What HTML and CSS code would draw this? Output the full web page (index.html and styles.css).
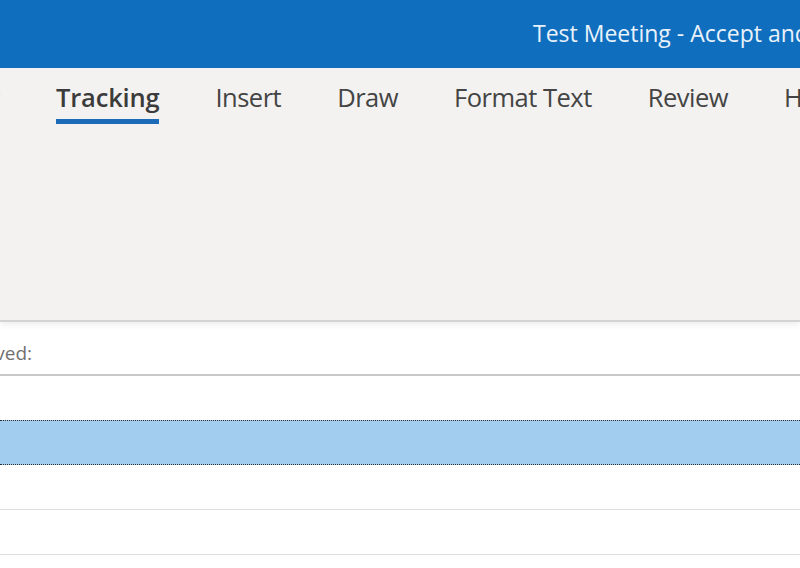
FILE: index.html
```html
<!DOCTYPE html>
<html lang="en">
<head>
<meta charset="utf-8">
<title>Test Meeting</title>
<link rel="stylesheet" href="styles.css">
</head>
<body>
<div class="window">
  <header class="titlebar">
    <div class="title">Test Meeting - Accept and Decline - Meeting</div>
  </header>
  <nav class="ribbon">
    <ul class="tabs">
      <li class="tab tab-cut">Meeting</li>
      <li class="tab active">Tracking</li>
      <li class="tab">Insert</li>
      <li class="tab">Draw</li>
      <li class="tab">Format Text</li>
      <li class="tab">Review</li>
      <li class="tab">Help</li>
    </ul>
  </nav>
  <section class="list">
    <div class="row head">
      <div class="label"><span>The following responses to this meeting have been received:</span></div>
    </div>
    <div class="row"></div>
    <div class="row selected"></div>
    <div class="row"></div>
    <div class="row"></div>
    <div class="row"></div>
  </section>
</div>
</body>
</html>
```
FILE: styles.css
```css
* { box-sizing: border-box; }
html, body { margin: 0; padding: 0; }
body {
  width: 800px;
  height: 568px;
  overflow: hidden;
  background: #ffffff;
  font-family: "Open Sans", "Noto Sans", "DejaVu Sans", sans-serif;
}
.window { display: flex; flex-direction: column; height: 568px; overflow: hidden; }
.window > * { flex: none; }
.titlebar {
  height: 68px;
  background: #106ebe;
  display: flex;
  align-items: center;
  padding-left: 533px;
  overflow: hidden;
}
.title {
  color: #e9f2fb;
  font-size: 23px;
  white-space: nowrap;
  padding-bottom: 2px;
}
.ribbon {
  height: 254px;
  background: #f3f2f1;
  border-bottom: 2px solid #d4d3d2;
  box-shadow: 0 3px 6px rgba(0,0,0,0.07);
  position: relative;
  z-index: 1;
  overflow: hidden;
}
.tabs {
  list-style: none;
  margin: 0;
  padding: 0;
  display: flex;
  gap: 56px;
  margin-left: -93px;
  white-space: nowrap;
}
.tab {
  font-size: 25.5px;
  color: #444444;
  padding-top: 12px;
  height: 56px;
  letter-spacing: -0.5px;
}
.tab.active {
  font-weight: 600;
  color: #3b3b3b;
  letter-spacing: -0.2px;
  border-bottom: 5px solid #1b6bb8;
}
.tab-cut { color: #d0cfce; }
.list { display: flex; flex-direction: column; flex: 1 1 auto; min-height: 0; overflow: hidden; }
.row {
  height: 45px;
  border-bottom: 1px solid #dddddd;
  flex: none;
}
.row.head {
  height: 54px;
  border-bottom: 2px solid #c9c9c9;
  display: flex;
  align-items: center;
  padding-top: 10px;
}
.label {
  width: 32px;
  display: flex;
  justify-content: flex-end;
  white-space: nowrap;
  font-size: 19px;
  color: #707070;
}
.row.selected {
  background: #a3cdef;
  border-top: 1px dotted #2a2f36;
  border-bottom: 1px dotted #2a2f36;
  margin-top: -1px;
}
```
